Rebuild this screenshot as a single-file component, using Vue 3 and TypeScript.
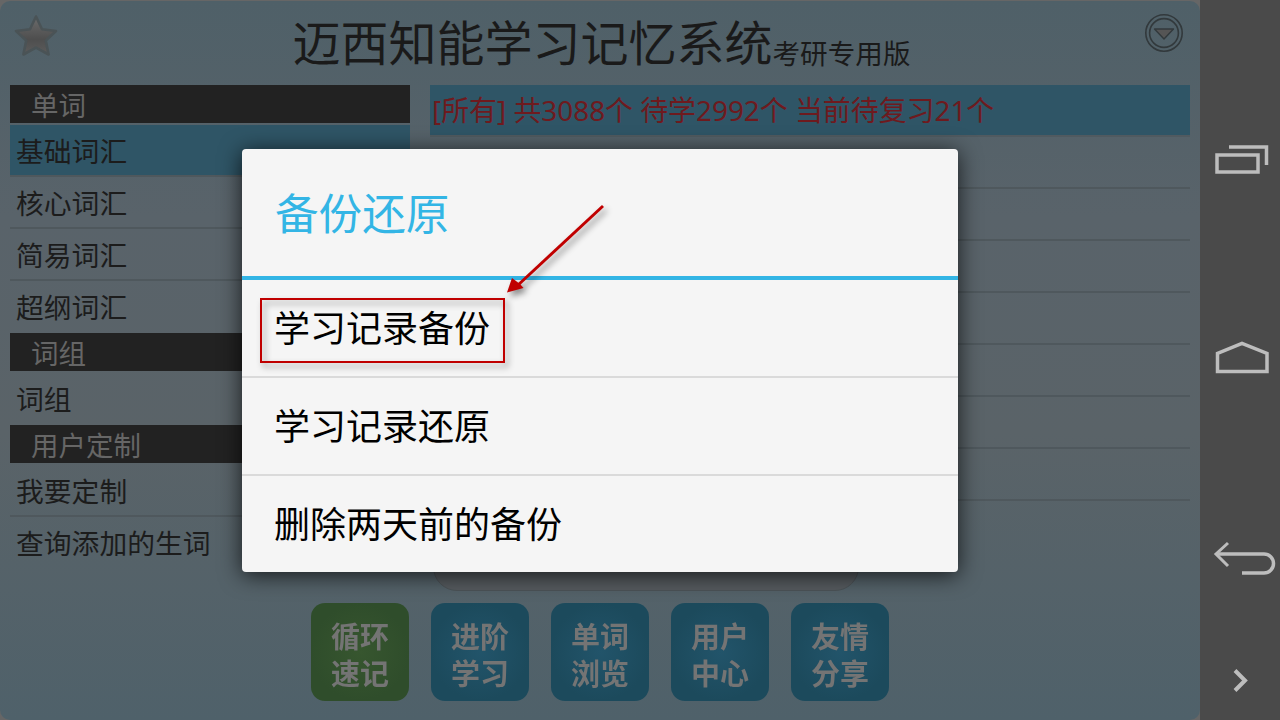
<script setup lang="ts">
interface Group {
  title: string
  items: string[]
}

const groups: Group[] = [
  { title: '单词', items: ['基础词汇', '核心词汇', '简易词汇', '超纲词汇'] },
  { title: '词组', items: ['词组'] },
  { title: '用户定制', items: ['我要定制', '查询添加的生词'] }
]

const rows = [1, 2, 3, 4, 5, 6, 7]

const tools = [
  { top: '循环', bottom: '速记', green: true },
  { top: '进阶', bottom: '学习', green: false },
  { top: '单词', bottom: '浏览', green: false },
  { top: '用户', bottom: '中心', green: false },
  { top: '友情', bottom: '分享', green: false }
]

const backups = ['学习记录备份', '学习记录还原', '删除两天前的备份']
</script>

<template>
  <div class="screen">
    <div class="app">
      <header class="head">
        <svg class="star" width="46" height="44" viewBox="0 0 46 44">
          <defs>
            <linearGradient id="starFill" x1="0" y1="0" x2="0" y2="1">
              <stop offset="0" stop-color="#6c6c6c" />
              <stop offset="0.6" stop-color="#4e4e4e" />
              <stop offset="1" stop-color="#5c5c5c" />
            </linearGradient>
          </defs>
          <path
            d="M23 2.5 L29 15.2 L43 17 L32.8 26.6 L35.6 40.5 L23 33.6 L10.4 40.5 L13.2 26.6 L3 17 L17 15.2 Z"
            fill="url(#starFill)"
            stroke="#4a5356"
            stroke-width="2.6"
            stroke-linejoin="round"
          />
        </svg>
        <h1 class="title">迈西知能学习记忆系统<small>考研专用版</small></h1>
        <svg class="drop" width="40" height="40" viewBox="0 0 40 40">
          <circle cx="20" cy="20" r="18.2" fill="none" stroke="#32393c" stroke-width="1.6" />
          <circle cx="20" cy="20" r="14.4" fill="none" stroke="#32393c" stroke-width="1.6" />
          <path d="M10.5 16 H29.5 L20 26 Z" fill="#555" stroke="#32393c" stroke-width="1.4" stroke-linejoin="round" />
        </svg>
      </header>

      <div class="main">
        <aside class="side">
          <template v-for="(group, g) in groups" :key="group.title">
            <div class="side-title">{{ group.title }}</div>
            <div
              v-for="(item, i) in group.items"
              :key="item"
              class="side-item"
              :class="{ active: g === 0 && i === 0, last: i === group.items.length - 1 }"
            >
              {{ item }}
            </div>
          </template>
        </aside>

        <section class="list">
          <div class="stat">[所有] 共3088个 待学2992个 当前待复习21个</div>
          <div v-for="row in rows" :key="row" class="list-row"></div>
        </section>
      </div>

      <nav class="tools">
        <div v-for="tool in tools" :key="tool.top" class="tool" :class="{ green: tool.green }">
          <span>{{ tool.top }}</span>
          <span>{{ tool.bottom }}</span>
        </div>
      </nav>

      <div class="pill"></div>

      <div class="dialog">
        <div class="dialog-title">备份还原</div>
        <div v-for="name in backups" :key="name" class="dialog-item">{{ name }}</div>
      </div>

      <div class="mark"></div>
      <svg class="arrow" width="120" height="110" viewBox="0 0 120 110">
        <path d="M103 6 L17 86" stroke="#c00000" stroke-width="3" fill="none" />
        <path d="M7 92.5 L12 78 L20 84 L23.5 88 Z" fill="#c00000" />
      </svg>
    </div>

    <aside class="bar">
      <svg class="bar-icon" width="80" height="720" viewBox="0 0 80 720">
        <g fill="none" stroke="#bdbdbd" stroke-width="3.5">
          <rect x="17" y="155" width="41" height="17" />
          <path d="M29 147 H66.5 V165" />
          <path d="M17.5 371.5 V353.5 L42 343.5 L67 353.5 V371.5 Z" />
          <path d="M16 554 H64 A9.5 9.5 0 0 1 64 573 H42" />
          <path d="M28 543 L16 554 L28 566" stroke-width="3" />
          <path d="M35 670.5 L45 680.5 L35 690.5" stroke-width="4" />
        </g>
      </svg>
    </aside>
  </div>
</template>

<style>
html,
body {
  margin: 0;
  background: #666;
}
</style>

<style scoped>
.screen {
  display: flex;
  width: 1280px;
  height: 720px;
  overflow: hidden;
  background: #666;
  font-family: "Noto Sans", "Noto Sans CJK SC", sans-serif;
}

.app {
  position: relative;
  width: 1200px;
  height: 719px;
  margin-top: 1px;
  border-radius: 10px;
  background: linear-gradient(180deg, #4f6068 0%, #59636a 30%, #5a6368 60%, #4f616a 100%);
}

.head {
  display: flex;
  align-items: center;
  height: 84px;
  padding: 0 18px 8px 13px;
  box-sizing: border-box;
}

.star {
  flex: none;
  margin-bottom: 6px;
}

.drop {
  flex: none;
  margin-right: -2px;
  margin-bottom: 13px;
}

.title {
  flex: 1;
  margin: 17px 0 0;
  color: #1a1a1a;
  font-size: 48px;
  font-weight: 400;
  line-height: 60px;
  text-align: center;
}

.title small {
  font-size: 27.6px;
  vertical-align: -3px;
}

.main {
  display: flex;
  gap: 20px;
  height: 518px;
  padding: 0 10px;
}

.side {
  width: 400px;
}

.side-title {
  height: 38px;
  margin-bottom: 2px;
  padding-left: 21px;
  background: #222;
  color: #666;
  font-size: 27.5px;
  line-height: 41px;
}

.side-item {
  height: 52px;
  padding-left: 6px;
  box-sizing: border-box;
  border-bottom: 2px solid #4f585d;
  color: #1c1c1c;
  font-size: 27.8px;
  line-height: 52px;
}

.side-item.active {
  background: #2f5566;
  background-clip: padding-box;
}

.side-item.last {
  border-bottom-color: transparent;
}

.list {
  flex: 1;
}

.stat {
  height: 52px;
  padding-left: 2px;
  box-sizing: border-box;
  border-bottom: 2px solid #505a60;
  background: #2f5566;
  background-clip: padding-box;
  color: #6e1a1e;
  font-size: 27.9px;
  line-height: 51px;
}

.list-row {
  height: 52px;
  box-sizing: border-box;
  border-bottom: 2px solid #4f585d;
}

.tools {
  display: flex;
  justify-content: center;
  gap: 22px;
}

.tool {
  display: flex;
  flex-direction: column;
  align-items: center;
  justify-content: center;
  width: 98px;
  height: 98px;
  padding-top: 5px;
  box-sizing: border-box;
  border-radius: 14px;
  background: radial-gradient(circle, #22546a 0%, #1c4a5c 70%);
  color: #747474;
  font-size: 29px;
  font-weight: 700;
  line-height: 37px;
}

.tool span {
  filter: blur(0.4px);
}

.tool.green {
  background: radial-gradient(circle, #37562f 0%, #2f4d2b 70%);
}

.pill {
  position: absolute;
  left: 433px;
  top: 500px;
  width: 426px;
  height: 90px;
  box-sizing: border-box;
  border: 1px solid #4c5357;
  border-radius: 0 0 24px 24px;
  background: #565b5f;
}

.dialog {
  position: absolute;
  left: 242px;
  top: 148px;
  display: flex;
  flex-direction: column;
  width: 716px;
  border-radius: 4px;
  background: #f5f5f5;
  box-shadow: 0 3px 22px rgba(0, 0, 0, 0.75);
}

.dialog-title {
  height: 127px;
  padding-left: 33px;
  box-sizing: border-box;
  color: #33b5e5;
  font-size: 43.6px;
  line-height: 128px;
}

.dialog-item {
  height: 98px;
  padding-left: 32px;
  box-sizing: border-box;
  border-bottom: 2px solid #dadada;
  color: #000;
  font-size: 36px;
  line-height: 97px;
}

.dialog-item:nth-child(2) {
  height: 102px;
  border-top: 4px solid #33b5e5;
}

.dialog-item:last-child {
  height: 96px;
  border-bottom: 0;
}

.mark {
  position: absolute;
  left: 260px;
  top: 297px;
  width: 245px;
  height: 65px;
  box-sizing: border-box;
  border: 2px solid #c00000;
  filter: drop-shadow(3px 4px 3px rgba(0, 0, 0, 0.4));
}

.arrow {
  position: absolute;
  left: 500px;
  top: 199px;
  filter: drop-shadow(3px 4px 3px rgba(0, 0, 0, 0.45));
}

.bar {
  width: 80px;
  height: 720px;
  background: #4a4a4a;
}

.bar-icon {
  display: block;
}
</style>
